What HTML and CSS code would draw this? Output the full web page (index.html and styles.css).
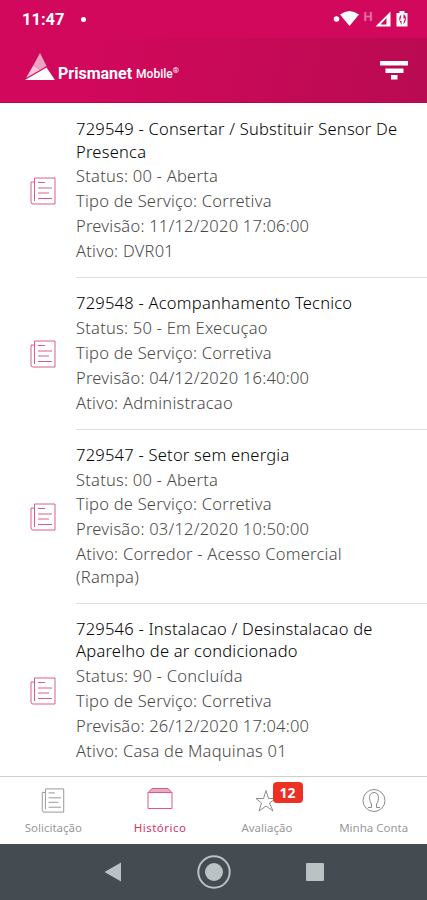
FILE: index.html
```
<!DOCTYPE html>
<html lang="pt-BR">
  <head>
    <meta charset="utf-8">
    <title>Prismanet Mobile</title>
    <link rel="stylesheet" href="styles.css">
  </head>
  <body>
    <svg class="defs">
      <symbol id="paper" viewBox="0 0 26 28">
        <path d="M4.500 1h20.500v26H3a2 2 0 0 1-2-2V5h3.500zM4.500 5v19"/>
        <path d="M8 5.500h7M8 11h14M8 16h11M8 21.500h14"/>
      </symbol>
    </svg>

    <div class="status">
      <span class="clock">11:47</span>
      <i class="dot"></i>
      <svg class="signals" width="76" height="20" viewBox="0 0 76 20">
        <circle cx="4.500" cy="10" r="2.800"/>
        <path d="M8 5.500Q17.500-1.500 27 5.500L17.500 17z"/>
        <text x="31.500" y="12">H</text>
        <path fill-rule="evenodd" d="M43.500 17.500L58.500 2.500v15zM48.500 15.500h6v-6.500z"/>
        <path fill-rule="evenodd" d="M64.500 4h3V2h5v2h3v13.500h-11zM69.500 5.500q-3 2-2 6l2 4.500v-4H68zM71.500 5v4.500H73L71 15q4-3 2.500-8z"/>
      </svg>
    </div>

    <header class="header">
      <svg class="logo" width="30" height="27" viewBox="0 0 30 27">
        <path fill="#eda3c4" d="M15 0l6.500 13L15 17 8.500 12z"/>
        <path fill="#f5c4d9" d="M8.500 12l6.500 5L1 25z"/>
        <path fill="#fff" d="M21.500 14.500L30 27H0z"/>
      </svg>
      <span class="brand">Prismanet</span>
      <span class="brand-sub">Mobile<sup>®</sup></span>
      <svg class="filter" width="28" height="19" viewBox="0 0 28 19">
        <path d="M0 0h28v4.500H0zM5.500 7.500h18v4.500h-18zM11 14h6.500v4.500H11z"/>
      </svg>
    </header>

    <ul class="list">
      <li>
        <svg class="paper"><use href="#paper"/></svg>
        <div class="info">
          <h2>729549 - Consertar / Substituir Sensor De<br>Presenca</h2>
          <p>Status: 00 - Aberta</p>
          <p>Tipo de Serviço: Corretiva</p>
          <p>Previsão: 11/12/2020 17:06:00</p>
          <p>Ativo: DVR01</p>
        </div>
      </li>
      <li>
        <svg class="paper"><use href="#paper"/></svg>
        <div class="info">
          <h2>729548 - Acompanhamento Tecnico</h2>
          <p>Status: 50 - Em Execuçao</p>
          <p>Tipo de Serviço: Corretiva</p>
          <p>Previsão: 04/12/2020 16:40:00</p>
          <p>Ativo: Administracao</p>
        </div>
      </li>
      <li>
        <svg class="paper"><use href="#paper"/></svg>
        <div class="info">
          <h2>729547 - Setor sem energia</h2>
          <p>Status: 00 - Aberta</p>
          <p>Tipo de Serviço: Corretiva</p>
          <p>Previsão: 03/12/2020 10:50:00</p>
          <p>Ativo: Corredor - Acesso Comercial<br>(Rampa)</p>
        </div>
      </li>
      <li>
        <svg class="paper"><use href="#paper"/></svg>
        <div class="info">
          <h2>729546 - Instalacao / Desinstalacao de<br>Aparelho de ar condicionado</h2>
          <p>Status: 90 - Concluída</p>
          <p>Tipo de Serviço: Corretiva</p>
          <p>Previsão: 26/12/2020 17:04:00</p>
          <p>Ativo: Casa de Maquinas 01</p>
        </div>
      </li>
    </ul>

    <nav class="tabs">
      <a class="tab">
        <svg width="24" height="25"><use href="#paper"/></svg>
        <span>Solicitação</span>
      </a>
      <a class="tab active">
        <svg width="26" height="25" viewBox="0 0 26 25">
          <path class="lid" d="M5 .5h16l4 4H1z"/>
          <path d="M1 4.500h24v16H1z"/>
        </svg>
        <span>Histórico</span>
      </a>
      <a class="tab">
        <svg width="24" height="25" viewBox="0 0 24 25">
          <path d="M11 2.500l2.500 8h7.500l-6.500 4.500 3.500 8-7-5-7 5 2.500-8L1 10.500h7.500z"/>
        </svg>
        <span>Avaliação</span>
        <b class="badge">12</b>
      </a>
      <a class="tab">
        <svg width="24" height="25" viewBox="0 0 24 25">
          <circle cx="12" cy="12.500" r="11"/>
          <path d="M6 19.500h3.500v-3.500C6.500 12 6.500 4.500 12 4.500s5.500 7.500 2.500 11.500v3.500H18"/>
        </svg>
        <span>Minha Conta</span>
      </a>
    </nav>

    <div class="softkeys">
      <svg width="18" height="20" viewBox="0 0 18 20"><path d="M17 .5v19L.5 10z"/></svg>
      <svg width="34" height="34" viewBox="0 0 34 34">
        <circle class="ring" cx="17" cy="17" r="15.700"/>
        <circle cx="17" cy="17" r="9"/>
      </svg>
      <svg width="18" height="18" viewBox="0 0 18 18"><rect width="18" height="18" rx="1"/></svg>
    </div>
  </body>
</html>
```

FILE: styles.css
```
body {
  margin: 0;
  height: 900px;
  display: flex;
  flex-direction: column;
  overflow: hidden;
  background: #fff;
  font-family: "Noto Sans", "Open Sans", sans-serif;
}
.defs {
  position: absolute;
  width: 0;
  height: 0;
}
.status {
  box-sizing: border-box;
  height: 38px;
  padding: 0 19px 0 22px;
  display: flex;
  align-items: center;
  background: #d2085c;
  color: #fff;
}
.clock {
  font: bold 16.500px Roboto, sans-serif;
}
.dot {
  width: 5px;
  height: 5px;
  margin-left: 16px;
  border-radius: 50%;
  background: #fff;
}
.signals {
  margin-left: auto;
  fill: #fff;
}
.signals text {
  font: bold 13px Roboto, sans-serif;
  fill: #ea70a1;
}
.header {
  box-sizing: border-box;
  height: 65px;
  padding: 0 19px 0 25px;
  display: flex;
  align-items: center;
  background: linear-gradient(100deg, #d2085c 20%, #b90b51);
  border-bottom: 1px solid #b4074d;
  color: #fff;
}
.logo {
  margin-top: -8px;
}
.brand {
  margin: 6px 0 0 3px;
  font: bold 16px Roboto, sans-serif;
}
.brand-sub {
  margin: 8px 0 0 4px;
  font: 500 12px Roboto, sans-serif;
}
.brand-sub sup {
  font-size: 8px;
  line-height: 0;
}
.filter {
  margin-left: auto;
  fill: #fff;
}
.list {
  box-sizing: border-box;
  margin: 0;
  padding: 1px 0 0;
  height: 673px;
  overflow: hidden;
  list-style: none;
}
.list li {
  display: flex;
  align-items: center;
}
.paper {
  width: 26px;
  height: 28px;
  margin: 0 20px 0 30px;
  fill: none;
  stroke: #dc5c86;
}
.info {
  flex: 1;
  padding: 14px 0 14.500px;
  border-bottom: 1px solid #dedede;
}
.info h2,
.info p {
  margin: 0 0 2.400px;
  font-size: 16.500px;
  font-weight: 300;
  line-height: 22.500px;
  letter-spacing: .23px;
  color: #484848;
  white-space: nowrap;
}
.info h2 {
  color: #000;
}
.info p:last-child {
  margin: 0;
}
.tabs {
  box-sizing: border-box;
  height: 68px;
  display: flex;
  border-top: 1px solid #cfcfcf;
}
.tab {
  position: relative;
  flex: 1;
  padding-top: 11px;
  display: flex;
  flex-direction: column;
  align-items: center;
  font-size: 11.500px;
  line-height: 16px;
  color: #999;
}
.tab svg {
  fill: none;
  stroke: #8c8c8c;
}
.tab span {
  margin-top: 7px;
}
.active {
  color: #d23467;
  letter-spacing: .5px;
}
.active svg {
  stroke: #dc5c86;
}
.active .lid {
  fill: #eba9bf;
}
.badge {
  position: absolute;
  left: 59px;
  top: 5px;
  width: 30px;
  border-radius: 4px;
  background: #ee3024;
  color: #fff;
  font-size: 14px;
  line-height: 21px;
  text-align: center;
}
.softkeys {
  height: 56px;
  display: flex;
  align-items: center;
  justify-content: center;
  gap: 75px;
  background: #454c51;
  fill: #bbc2c4;
}
.ring {
  fill: none;
  stroke: #bbc2c4;
  stroke-width: 2;
}
```
